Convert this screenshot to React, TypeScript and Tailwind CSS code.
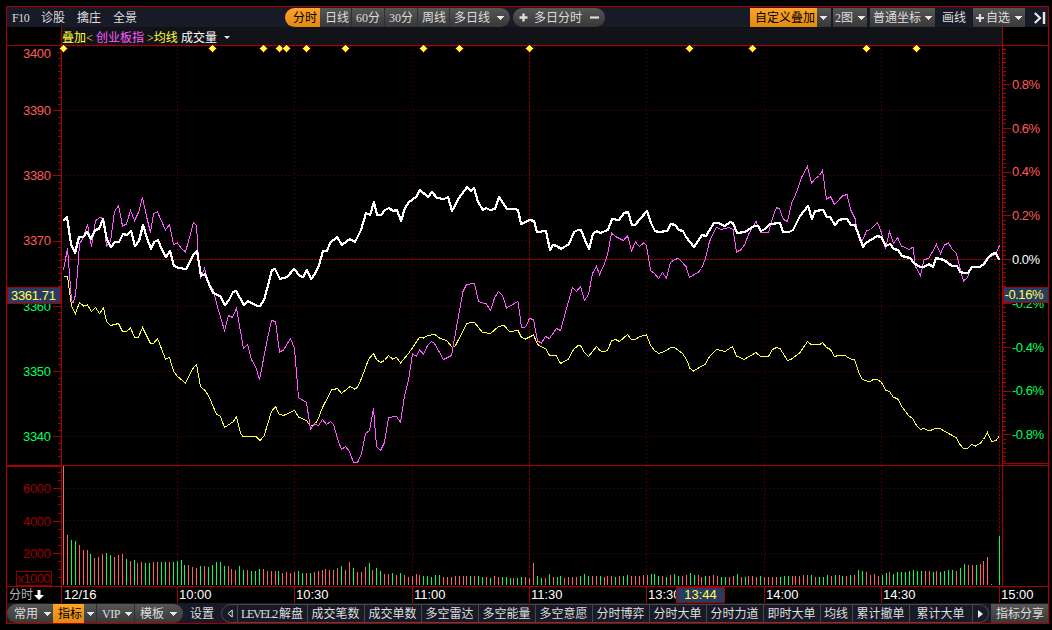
import type { ReactNode } from "react";
import { clsx } from "clsx";

// Chart coordinates are window pixels; every svg below shares them through its viewBox.
const PRICE_LINE =
  "63,221 67,217 71,244 75,253 79,237 83,237 87,232 91,239 95,230 99,229 103,219 107,240 111,247 115,242 119,242 123,234 127,235 131,231 135,246 139,241 143,225 147,238 151,249 154,242 158,240 162,250 166,257 170,251 174,266 179,268 186,269 194,254 197,251 201,276 205,274 209,284 213,293 220,296 225,305 229,300 233,292 236,291 244,305 248,301 257,306 260,306 264,300 267,289 272,270 275,269 280,279 287,277 294,269 300,276 303,277 307,270 311,279 315,274 319,265 323,251 327,251 330,243 337,237 342,245 350,239 355,242 361,230 366,213 370,215 374,202 377,215 381,215 385,210 389,208 393,211 397,210 401,221 405,208 409,202 416,197 420,190 428,197 432,192 437,198 444,199 448,197 452,211 459,198 467,187 471,191 474,188 478,202 483,210 486,208 490,210 495,209 499,197 507,209 515,209 518,210 521,224 530,220 534,221 537,232 546,231 550,250 553,245 557,246 561,249 569,244 574,232 578,230 581,230 585,240 589,249 593,234 597,231 600,233 608,230 612,219 619,220 624,213 628,212 632,225 635,225 640,219 647,211 651,223 655,231 659,232 667,231 671,224 675,225 679,230 683,231 686,237 694,247 702,235 706,236 714,223 718,223 725,226 730,222 733,223 737,233 745,232 754,226 758,226 761,231 765,229 770,224 780,223 783,232 789,232 793,230 800,216 808,206 812,219 815,211 823,210 827,217 830,217 835,225 839,220 843,219 847,219 851,225 855,225 863,247 866,243 877,236 881,237 886,246 890,244 894,249 898,250 902,256 910,258 914,263 918,266 921,267 924,267 929,264 933,267 936,258 944,260 952,266 957,266 960,272 964,273 968,273 972,267 980,267 984,264 988,258 992,254 996,253 999,260";

const OVERLAY_LINE =
  "63.5,270 67.5,248.5 71.5,300 73,303 75.5,295 77.5,273 79.5,244 83.5,237.5 87.5,224.5 91.5,246.5 95.5,221 99.5,217.5 103.5,218.5 106.5,246.5 110.5,241.5 114.5,211.5 118.5,205.5 122.5,226 126.5,224 130.5,210.5 134.5,220.5 138.5,212.5 142.5,197.5 146.5,216.5 150.5,232.5 153.5,213.5 157.5,212 165.5,230 169.5,224.5 173.5,244.5 177.5,243 181.5,248.5 185.5,252 189.5,237.5 193.5,222.5 196.5,225.5 198.5,260 200.5,278.5 204.5,268.5 208.5,283 213.5,290 216.5,303.5 224.5,330.5 228.5,315.5 232.5,317.5 236.5,308.5 243.5,348.5 247.5,344.5 251.5,359.5 256,368 259.5,379.5 267.5,338.5 271.5,320.5 275.5,321.5 279.5,352 283.5,350 290.5,338.5 294.5,348.5 298.5,397.5 306.5,402.5 310.5,429 314.5,424 318.5,425.5 322.5,419.5 326.5,424.5 330.5,421.5 333.5,424.5 337.5,438.5 341.5,449.5 345.5,446.5 349.5,451.5 353.5,462.5 357.5,462.5 361.5,454 365.5,433.5 369.5,430.5 373.5,408.5 376.5,446.5 380.5,450.5 384.5,442.5 388.5,417.5 396.5,416.5 400.5,422.5 404.5,396 408.5,380.5 412.5,354 416.5,356.5 419.5,350 423.5,354 427.5,345.5 431.5,341.5 434.5,343.5 443.5,359.5 451.5,355.5 458.5,316 463,291.5 466.5,284.5 474.5,283.5 478.5,301.5 486.5,304 490.5,310.5 494.5,298 498.5,291.5 502.5,295.5 506.5,308 518,301.5 521.5,327.5 525.5,327 529.5,318.5 533.5,319.5 537.5,341 541.5,343 545.5,336.5 549.5,338.5 556.5,328.5 560.5,330.5 565,314 572.5,287.5 576.5,291.5 580.5,286.5 584.5,300.5 588.5,294.5 592.5,273.5 596.5,266.5 599.5,274.5 604,265 607.5,255 611.5,233 615.5,236.5 623.5,240.5 627.5,235.5 631.5,251 635.5,242 639.5,246.5 643.5,243 646.5,245.5 650.5,270.5 654.5,273.5 658.5,278.5 662.5,272.5 666.5,278.5 670.5,262.5 674.5,259.5 678.5,258.5 686,266.5 689.5,277.5 698.5,272 701.5,268.5 705.5,258.5 709.5,241.5 714,232 716.5,227.5 721.5,229.5 729,227.5 733,229.5 736.5,252 740.5,250 744.5,245 749,233.5 756,221.5 760.5,232.5 768.5,232.5 772.5,218 776.5,207.5 779.5,209 783.5,219.5 787.5,221.5 791.5,203.5 796,193.5 802,176.5 807.5,166.5 811.5,183.5 815,179 819.5,175.5 822.5,170 826.5,199.5 830.5,196.5 834.5,204.5 842.5,196 847,194.5 850.5,209.5 855,218.5 858.5,237 862.5,240.5 866.5,231 870.5,229.5 877.5,222.5 881,231.5 885.5,248.5 889.5,231.5 893.5,243.5 897.5,237.5 901.5,246 909.5,249.5 913,247 915.5,266.5 920.5,275.5 924,260 929,258 936.5,244.5 940.5,253.5 944.5,245 948.5,243 952.5,249.5 956.5,253.5 960,268.5 963.5,281 967.5,277.5 971.5,266.5 980,268 987.5,257.5 995.5,254.5 999.5,245.5";

const AVERAGE_LINE =
  "63.5,276.5 67.5,276.5 71.5,306 75.5,313.5 79.5,302.5 83.5,306 87.5,305 91.5,311.5 95.5,307.5 99.5,313.5 103.5,308 106.5,321.5 110.5,325.5 118.5,323.5 122.5,331.5 126.5,331.5 130.5,328 134.5,337 138.5,337 142.5,327.5 150.5,343.5 153.5,343.5 157.5,338.5 165.5,359 169.5,357.5 173.5,371 177.5,376.5 185.5,383 193.5,367.5 196.5,364.5 200.5,386.5 205,390.5 209.5,397.5 213.5,407.5 216.5,414 220.5,416.5 224.5,427.5 233.5,421.5 236.5,416.5 240.5,433.5 243.5,437 256,436.5 260,440.5 264,436 271.5,411.5 275.5,406.5 279,414 283.5,415.5 294.5,410.5 298.5,417 306.5,420.5 310.5,426.5 315.5,423.5 318.5,418 322.5,407.5 331.5,390 337.5,388.5 341.5,393.5 350,386.5 354.5,389 357.5,387.5 361.5,378.5 368.5,359.5 373.5,353.5 376.5,359.5 380.5,362.5 384.5,360.5 388.5,355.5 392.5,359 396.5,357.5 400.5,363 408.5,353.5 419.5,337.5 423.5,338 427.5,335.5 435,334.5 440,338.5 446.5,340.5 452.5,347.5 455.5,345.5 466.5,324 470.5,322.5 474.5,322.5 482.5,332.5 490.5,333.5 498.5,326.5 504,325.5 509.5,331.5 518,330.5 521.5,337.5 525.5,339 533.5,335 537.5,344.5 546,349 549.5,355.5 556.5,356 560.5,363.5 568,359.5 573.5,349.5 577.5,346 580.5,345.5 584.5,352.5 588.5,356.5 596.5,346.5 600,350.5 604,352 607.5,350.5 611.5,341 615.5,339.5 619.5,341.5 627.5,334.5 631,339 635.5,339.5 639.5,336.5 646.5,335 650.5,345 654.5,350.5 659,353.5 666.5,350.5 670.5,347.5 674.5,347.5 682.5,353.5 686.5,359.5 690,368.5 693.5,371 705.5,364 709.5,356.5 716.5,349.5 725,351.5 732.5,346.5 736.5,356 744,359.5 756,352.5 760.5,356.5 768.5,356.5 772.5,349.5 776.5,347.5 780,348.5 787.5,360.5 791.5,359 800,352.5 807.5,341.5 811.5,345 820,344.5 822.5,342.5 826.5,347.5 830.5,349.5 834.5,356.5 838.5,355.5 845,355.5 850.5,359 854.5,359.5 858.5,371.5 862,379 869,382 873.5,379.5 877.5,379.5 881.5,382.5 885.5,390 889.5,391.5 893.5,397.5 897.5,398.5 901.5,406 908.5,415.5 913,419 916.5,425.5 920.5,429.5 924,428.5 929,431 935.5,428.5 940,428.5 944,431 956,437.5 960,444.5 963.5,448.5 967.5,448.5 971.5,444.5 975.5,446 980,443.5 983.5,439.5 987.5,432.5 991.5,441.5 996,440.5 999,436.5";

// one entry per minute: r = up, g = down, then the bar height
const VOLUME =
  "r119 r50 g45 g44 r40 r35 r35 g31 r27 r28 r31 g32 g30 r28 r30 r31 g26 r24 g25 r22 r23 g22 g22 r23 r23 g23 g23 r23 g23 g24 g25 g20 r20 r18 r17 g19 r19 g18 g20 g23 g23 g19 r19 r16 r15 g19 g15 r15 g14 g14 g16 r16 r14 r14 r14 g14 r12 r13 r12 r13 g14 g12 r12 g12 r13 r14 r15 r16 r15 r15 r17 g19 r15 r23 g17 r13 r13 r18 g22 r15 g17 g14 r11 r11 g12 r10 g12 r10 r8 r9 r11 r10 g9 g9 g8 g10 g10 r8 r8 r8 r9 r9 r9 r9 g9 r9 g9 g8 r8 g7 r9 r8 g8 g8 g7 r7 g7 g8 r8 r7 r22 g9 g7 r7 g11 r8 g8 g9 r7 r8 r8 r8 g9 g11 g9 r9 r9 g9 r8 r9 r9 g8 r9 g9 g10 r9 r9 r9 r10 r10 g11 g11 g9 r9 g8 r10 g11 g9 r9 r10 g12 g10 r10 r8 g9 r9 r10 r9 g8 g8 r8 r9 g11 r8 g8 r9 r9 r8 g9 r8 r8 r8 r8 g8 g9 g9 r9 r9 r9 r10 r10 g10 r8 g8 g8 g10 r9 g10 r10 g9 r9 g10 r10 g15 g14 r13 r10 r11 r9 g10 g12 r13 g11 g13 g13 g13 g14 g15 g14 g14 r14 r14 g13 r14 g13 g14 g15 g15 r14 g17 g21 r20 r20 g20 r21 r24 r28 r1 r0 g49"
    .split(" ")
    .map((v) => ({ up: v[0] === "r", h: Number(v.slice(1)) }));

const STEP = 3.917;

const PRICE_ROWS = [110, 175, 240, 306, 371, 436];
const VOLUME_ROWS = [488, 520, 553];
const HOURS = [177, 294, 412, 646, 764, 881];
const SIGNALS = [63, 212, 263, 279, 286, 306, 345, 423, 459, 529, 689, 752, 866, 916];

const PRICES = [
  { label: "3400", y: 58, up: true },
  { label: "3390", y: 115, up: true },
  { label: "3380", y: 180, up: true },
  { label: "3370", y: 245, up: true },
  { label: "3360", y: 311, up: false },
  { label: "3350", y: 376, up: false },
  { label: "3340", y: 441, up: false },
];

const PERCENTS = [0.8, 0.6, 0.4, 0.2, 0, -0.2, -0.4, -0.6, -0.8];

const RED = "#a80000";

function Caret({ className }: { className?: string }) {
  return (
    <svg viewBox="0 0 8 4" className={clsx("h-1 w-2 shrink-0", className)} fill="#e8e8e8" shapeRendering="crispEdges">
      <path d="M0 0H8L4 4Z" />
    </svg>
  );
}

function Segment({
  children,
  active,
  className,
}: {
  children: ReactNode;
  active?: boolean;
  className?: string;
}) {
  return (
    <button
      className={clsx(
        "flex h-full shrink-0 items-center whitespace-nowrap",
        active
          ? "bg-linear-to-b from-[#ffa42b] to-[#e08a0c] text-black"
          : "bg-linear-to-b from-[#565656] to-[#383838]",
        className,
      )}
    >
      {children}
    </button>
  );
}

function Header() {
  return (
    <div className="flex h-5 shrink-0 bg-[#181a27] pt-px">
      <nav className="flex w-[278px] items-center gap-3 pl-[5px]">
        <span className="w-[17px] tracking-[-0.4px]">F10</span>
        <span>诊股</span>
        <span>擒庄</span>
        <span>全景</span>
      </nav>
      <div className="flex h-[19px] w-[225px] overflow-hidden rounded-full">
        <Segment active className="w-[35px] pl-[8px]">分时</Segment>
        <Segment className="w-8 border-r border-[#303030] pl-[5px]">日线</Segment>
        <Segment className="w-[33px] border-r border-[#303030] pl-1">60分</Segment>
        <Segment className="w-[33px] border-r border-[#303030] pl-1">30分</Segment>
        <Segment className="w-8 border-r border-[#303030] pl-[4px]">周线</Segment>
        <Segment className="w-[60px] pl-1">
          多日线
          <Caret className="ml-[6px]" />
        </Segment>
      </div>
      <div className="ml-[3px] flex h-[19px] w-[92px] items-center rounded-full bg-linear-to-b from-[#565656] to-[#383838] pl-[6px]">
        <svg viewBox="0 0 9 9" className="size-[9px]" stroke="#dcdcdc" strokeWidth="2.4">
          <path d="M0.5 4.5H8.5M4.5 0.5V8.5" />
        </svg>
        <span className="ml-[6px]">多日分时</span>
        <svg viewBox="0 0 9 9" className="ml-2 size-[9px]" stroke="#dcdcdc" strokeWidth="2.2">
          <path d="M0 4.5H9" />
        </svg>
      </div>
      <div className="ml-auto flex h-[19px] items-center">
        <Segment active className="w-[67px] pl-[5px]">自定义叠加</Segment>
        <Segment className="w-[14px] pl-[2px]">
          <Caret />
        </Segment>
        <Segment className="ml-[2px] w-[34px] pl-[2px]">
          2图
          <Caret className="ml-[4px]" />
        </Segment>
        <Segment className="ml-[3px] w-[65px] pl-[3px]">
          普通坐标
          <Caret className="ml-[3px]" />
        </Segment>
        <span className="ml-[7px] w-[31px]">画线</span>
        <Segment className="w-[52px] pl-[3px]">
          <svg viewBox="0 0 8 8" className="size-2" stroke="#dcdcdc" strokeWidth="2.2">
            <path d="M0 4H8M4 0V8" />
          </svg>
          <span className="ml-[2px]">自选</span>
          <Caret className="ml-1" />
        </Segment>
        <svg viewBox="0 0 12 12" className="mr-[2px] ml-[9px] size-3" fill="none" stroke="#e8e8e8" strokeWidth="2.2">
          <path d="M0.8 1L6 6L0.8 11" />
          <path d="M10 0V12" strokeWidth="2.4" />
        </svg>
      </div>
    </div>
  );
}

function Legend() {
  return (
    <div className="flex h-[18px] shrink-0">
      <div className="w-[55px] border-r border-[#a80000]" />
      <div className="flex w-[940px] items-center bg-[#121318] pt-[3px] whitespace-nowrap text-[#ffff3c]">
        <span className="w-[34px]">叠加&lt;</span>
        <span className="w-[51px] text-[#ff5cff]">创业板指</span>
        <span className="w-[34px]">&gt;均线</span>
        <span className="text-white">成交量</span>
        <svg viewBox="0 0 6 3" className="ml-[7px] h-[3px] w-1.5" fill="#e8e8e8">
          <path d="M0 0H6L3 3Z" />
        </svg>
      </div>
      <div className="w-[46px] border-l border-[#a80000]" />
    </div>
  );
}

function Tick({ y, x1, x2 }: { y: number; x1: number; x2: number }) {
  return <rect x={x1} y={Math.round(y)} width={x2 - x1} height="1" fill={RED} />;
}

function LeftAxis() {
  return (
    <svg viewBox="7 45 55 542" width="55" height="542" className="font-['Liberation_Sans',sans-serif] text-[13px]">
      {Array.from({ length: 64 }, (_, i) => (
        <Tick key={i} y={45 + i * 6.52} x1={i % 10 === 0 ? 53 : 58} x2={61} />
      ))}
      {Array.from({ length: 14 }, (_, i) => (
        <Tick key={i} y={472 + i * 8.1} x1={i % 4 === 2 ? 53 : 58} x2={61} />
      ))}
      {PRICES.map((p) => (
        <text key={p.label} x="23" y={p.y} textLength="28" fill={p.up ? "#ff5a5a" : "#00ff5a"}>
          {p.label}
        </text>
      ))}
      {["6000", "4000", "2000"].map((v, i) => (
        <text key={v} x="23" y={493 + i * 32.5} textLength="28" fill="#9c0000">
          {v}
        </text>
      ))}
      <rect x="16.5" y="571.5" width="35" height="14" fill="none" stroke="#8c0000" />
      <text x="17.5" y="583" textLength="33" fill="#9c0000">x1000</text>
      <path d="M61.5 45V587M7 45.5H62M7 586.5H62" stroke={RED} />
      <path d="M7 466H62" stroke={RED} strokeWidth="2" />
      <rect x="7.5" y="287.5" width="53" height="16" fill="#2a3b63" stroke={RED} />
      <text x="11" y="300" fill="#ffff50" textLength="45">3361.71</text>
    </svg>
  );
}

function RightAxis() {
  return (
    <svg viewBox="1002 45 46 542" width="46" height="542" className="font-['Liberation_Sans',sans-serif] text-[13px]">
      {Array.from({ length: 95 }, (_, i) => (
        <Tick key={i} y={49 + i * 4.38} x1={1003} x2={(i - 8) % 10 === 0 ? 1011 : 1006} />
      ))}
      {PERCENTS.map((p) => (
        <text
          key={p}
          x="1012"
          y={264 - p * 219}
          fill={p > 0 ? "#ff5a5a" : p < 0 ? "#00ff5a" : "#ffffff"}
          textLength={p < 0 ? 32 : 28}
        >
          {p.toFixed(1)}%
        </text>
      ))}
      <path d="M1002.5 45V587M1002 45.5H1048M1002 463.5H1048M1002 465.5H1048M1002 586.5H1048" stroke={RED} />
      <rect x="1003.5" y="287.5" width="46" height="15" fill="#2a3b63" stroke={RED} />
      <text x="1004.5" y="299" fill="#ffff50" textLength="39">-0.16%</text>
    </svg>
  );
}

function Plot() {
  return (
    <svg
      viewBox="62 45 940 542"
      width="940"
      height="542"
      fill="none"
      shapeRendering="crispEdges"
      className="relative overflow-visible"
    >
      <g stroke="#6a0000" strokeDasharray="1 3">
        {[46, ...PRICE_ROWS, ...VOLUME_ROWS].map((y) => (
          <path key={y} d={`M65 ${y}.5H1002`} />
        ))}
        {HOURS.map((x) => (
          <path key={x} d={`M${x}.5 49V465`} />
        ))}
      </g>
      <g stroke="#8c0000" strokeDasharray="1 3">
        {HOURS.map((x) => (
          <path key={x} d={`M${x}.5 466V585`} />
        ))}
      </g>
      <path d="M529.5 49V585M999.5 49V585" stroke="#780000" strokeDasharray="3 1" />
      <path d="M62 259.5H1002" stroke={RED} strokeDasharray="3 1" />

      {VOLUME.map((bar, i) => (
        <rect
          key={i}
          x={Math.round(63 + i * STEP)}
          y={585 - bar.h}
          width="1"
          height={bar.h}
          fill={bar.up ? "#ff6060" : "#00ff5a"}
        />
      ))}

      <polyline points={AVERAGE_LINE} stroke="#ffff3c" />
      <polyline points={OVERLAY_LINE} stroke="#ff5cff" />
      <polyline points={PRICE_LINE} stroke="#ffffff" strokeWidth="2.2" strokeLinejoin="round" />

      <path d="M62 45.5H1002M62 465.5H1002M62 586.5H1002" stroke={RED} />
      {SIGNALS.map((x) => (
        <path
          key={x}
          d={`M${x + 0.5} 44.5L${x + 4.5} 48.5L${x + 0.5} 52.5L${x - 3.5} 48.5Z`}
          fill="#ffff3c"
          stroke="#b00000"
          strokeWidth="0.8"
          shapeRendering="auto"
        />
      ))}
    </svg>
  );
}

function TimeCell({ children, className }: { children: ReactNode; className?: string }) {
  return <div className={clsx("shrink-0 border-l border-[#a80000]", className ?? "pl-px")}>{children}</div>;
}

function TimeAxis() {
  return (
    <div className="relative flex h-4 shrink-0 font-['Liberation_Sans','Noto_Sans_CJK_SC',sans-serif] text-[13px] leading-4 text-white">
      <div className="flex w-[54px] items-center pl-[2px] text-xs text-[#b4b4b4]">
        分时
        <svg viewBox="0 0 10 10" className="ml-px size-[10px]" fill="#ffffff">
          <path d="M3.5 0H6.5V5H10L5 10L0 5H3.5Z" />
        </svg>
      </div>
      <TimeCell className="w-[116px] pl-[2px]">12/16</TimeCell>
      <TimeCell className="w-[117px] pl-px">10:00</TimeCell>
      <TimeCell className="w-[118px] pl-px">10:30</TimeCell>
      <TimeCell className="w-[117px] pl-px">11:00</TimeCell>
      <TimeCell className="w-[117px] pl-px">11:30</TimeCell>
      <TimeCell className="w-[118px] pl-px">13:30</TimeCell>
      <TimeCell className="w-[117px] pl-px">14:00</TimeCell>
      <TimeCell className="w-[118px] pl-px">14:30</TimeCell>
      <TimeCell>15:00</TimeCell>
      {/* cursor time */}
      <div className="absolute top-0 left-[669px] h-4 w-[49px] border border-[#a80000] bg-[#2a3b63] text-center leading-[14px] text-[#ffff50]">
        13:44
      </div>
    </div>
  );
}

function Indicator({ children, className }: { children: ReactNode; className?: string }) {
  return (
    <button
      className={clsx(
        "flex h-full shrink-0 items-center justify-center border-y border-r border-[#484848] bg-[#191a27] pr-px whitespace-nowrap",
        className ?? "w-[57px]",
      )}
    >
      {children}
    </button>
  );
}

function Toolbar() {
  return (
    <div className="flex h-5 shrink-0 bg-[#181a27] pt-px">
      <div className="flex h-[19px] w-[176px] overflow-hidden rounded-full">
        <Segment className="w-[46px] pl-[7px]">
          常用
          <Caret className="ml-[5px]" />
        </Segment>
        <Segment active className="w-[31px] pl-[5px]">指标</Segment>
        <Segment className="w-[13px] border-r border-[#303030] pl-[2px]">
          <Caret />
        </Segment>
        <Segment className="w-[38px] border-r border-[#303030] pl-[5px]">
          <span className="w-[18px] tracking-[-0.5px]">VIP</span>
          <Caret className="ml-[4px]" />
        </Segment>
        <Segment className="w-12 pl-[5px]">
          模板
          <Caret className="ml-[5px]" />
        </Segment>
      </div>
      <span className="flex w-[38px] items-center pl-[7px]">设置</span>
      <button className="flex h-[19px] w-[17px] items-center justify-center rounded-l-full border border-[#484848] bg-[#191a27]">
        <svg viewBox="0 0 6 9" className="h-[9px] w-1.5" fill="none" stroke="#e8e8e8">
          <path d="M5.2 1V8L1 4.5Z" />
        </svg>
      </button>
      <Indicator className="w-[70px]">
        <span className="tracking-[-1.35px]">LEVEL2</span>
        <span className="ml-[2px]">解盘</span>
      </Indicator>
      <Indicator>成交笔数</Indicator>
      <Indicator>成交单数</Indicator>
      <Indicator>多空雷达</Indicator>
      <Indicator>多空能量</Indicator>
      <Indicator>多空意愿</Indicator>
      <Indicator>分时博弈</Indicator>
      <Indicator>分时大单</Indicator>
      <Indicator>分时力道</Indicator>
      <Indicator>即时大单</Indicator>
      <Indicator className="w-8">均线</Indicator>
      <Indicator>累计撤单</Indicator>
      <Indicator className="w-[63px]">累计大单</Indicator>
      <button className="flex h-[19px] w-4 items-center justify-center rounded-r-full border border-l-0 border-[#484848] bg-[#191a27]">
        <svg viewBox="0 0 5 8" className="h-2 w-[5px]" fill="#e8e8e8">
          <path d="M0 0L5 4L0 8Z" />
        </svg>
      </button>
      <Segment className="ml-auto w-[57px] pl-[5px]">指标分享</Segment>
    </div>
  );
}

export default function App() {
  return (
    <div className="h-[630px] w-[1052px] overflow-hidden bg-black pt-1.5 pl-1.5 font-['Liberation_Serif','Noto_Sans_CJK_SC',sans-serif] text-xs leading-4 text-[#dedede]">
      <div className="flex h-[618px] w-[1043px] flex-col border border-[#a80000]">
        <Header />
        <Legend />
        <div className="flex h-[542px] w-full shrink-0 overflow-hidden">
          <LeftAxis />
          <Plot />
          <RightAxis />
        </div>
        <TimeAxis />
        <Toolbar />
      </div>
    </div>
  );
}
